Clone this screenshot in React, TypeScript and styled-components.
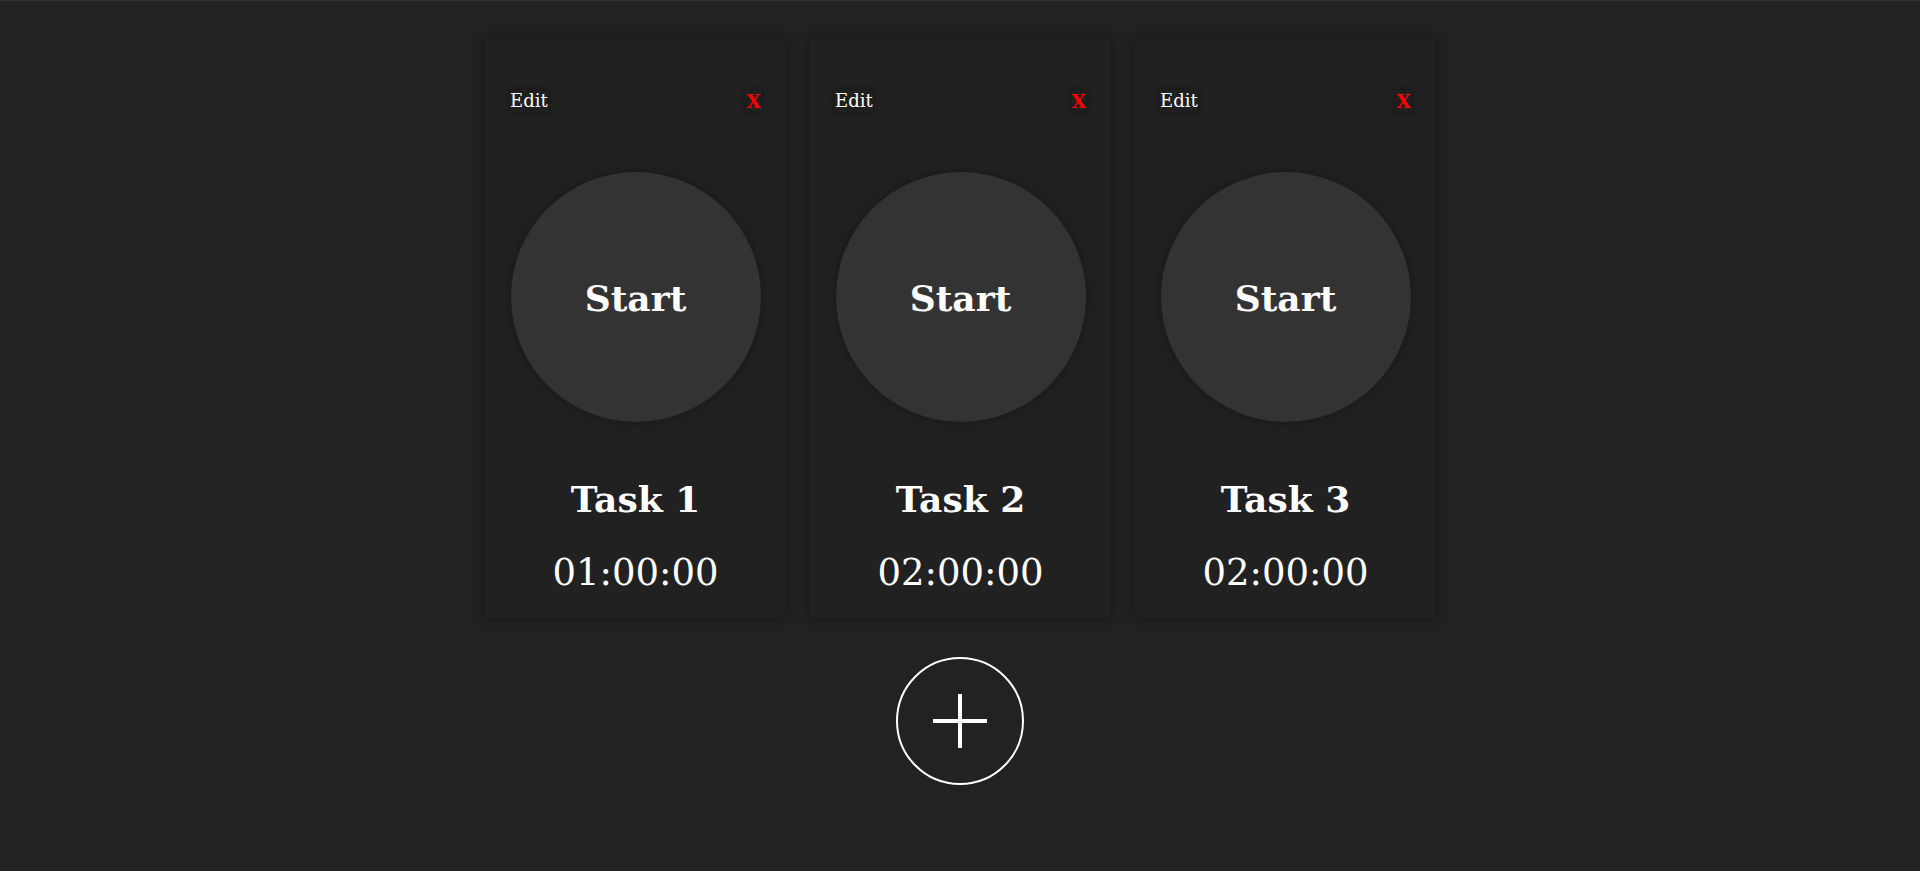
import React from "react";
import styled, { createGlobalStyle } from "styled-components";

const Global = createGlobalStyle`
  html, body {
    margin: 0;
    padding: 0;
    background: #222222;
  }
  body {
    font-family: "DejaVu Serif", "Liberation Serif", serif;
    color: #ffffff;
  }
`;

const Page = styled.main`
  min-height: 871px;
  box-sizing: border-box;
  border-top: 1px solid #2f2f2f;
  padding-top: 38px;
  display: flex;
  flex-direction: column;
  align-items: center;
`;

const CardRow = styled.div`
  display: flex;
  gap: 25px;
`;

const Card = styled.section`
  width: 300px;
  height: 579px;
  box-sizing: border-box;
  padding: 51px 24px 0 25px;
  background: #212121;
  box-shadow: 0 0 12px rgba(0, 0, 0, 0.35);
  display: flex;
  flex-direction: column;
  align-items: center;
`;

const CardHeader = styled.div`
  align-self: stretch;
  display: flex;
  justify-content: space-between;
  align-items: center;
  height: 22px;
`;

const SmallButton = styled.button<{ $danger?: boolean }>`
  border: none;
  padding: 0;
  margin: 0;
  background: #1f1f1f;
  box-shadow: 0 0 6px rgba(0, 0, 0, 0.45);
  color: ${(p) => (p.$danger ? "#ff0000" : "#ffffff")};
  font-family: "DejaVu Serif", "Liberation Serif", serif;
  font-size: ${(p) => (p.$danger ? "19px" : "18px")};
  font-weight: ${(p) => (p.$danger ? 700 : 400)};
  line-height: 22px;
  cursor: pointer;
`;

const StartCircle = styled.button`
  margin-top: 60px;
  width: 250px;
  height: 250px;
  border-radius: 50%;
  border: none;
  background: #333333;
  box-shadow: 0 0 10px rgba(0, 0, 0, 0.35);
  color: #ffffff;
  font-family: "DejaVu Serif", "Liberation Serif", serif;
  font-weight: 700;
  font-size: 36px;
  display: flex;
  align-items: center;
  justify-content: center;
  padding: 2px 0 0;
  cursor: pointer;
`;

const TaskTitle = styled.h2`
  margin: 57px 0 0;
  font-size: 36px;
  font-weight: 700;
  line-height: 40px;
`;

const TaskTime = styled.div`
  margin-top: 34px;
  font-size: 37px;
  line-height: 40px;
`;

const AddButton = styled.button`
  margin-top: 39px;
  width: 128px;
  height: 128px;
  border-radius: 50%;
  border: 2px solid #ffffff;
  background: transparent;
  display: flex;
  align-items: center;
  justify-content: center;
  padding: 0;
  cursor: pointer;
`;

const tasks = [
  { name: "Task 1", time: "01:00:00" },
  { name: "Task 2", time: "02:00:00" },
  { name: "Task 3", time: "02:00:00" },
];

export default function App() {
  return (
    <>
      <Global />
      <Page>
        <CardRow>
          {tasks.map((t) => (
            <Card key={t.name}>
              <CardHeader>
                <SmallButton>Edit</SmallButton>
                <SmallButton $danger>X</SmallButton>
              </CardHeader>
              <StartCircle>Start</StartCircle>
              <TaskTitle>{t.name}</TaskTitle>
              <TaskTime>{t.time}</TaskTime>
            </Card>
          ))}
        </CardRow>
        <AddButton aria-label="Add task">
          <svg width="56" height="56" viewBox="0 0 56 56">
            <path d="M28 1 V55 M1 28 H55" stroke="#ffffff" strokeWidth="4" fill="none" />
          </svg>
        </AddButton>
      </Page>
    </>
  );
}
